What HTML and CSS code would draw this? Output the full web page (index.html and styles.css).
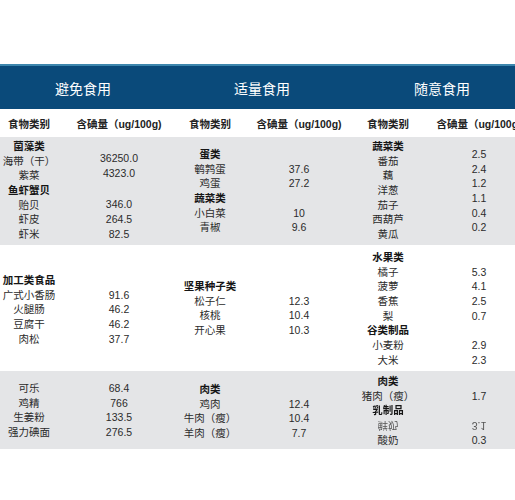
FILE: index.html
```html
<!DOCTYPE html>
<html lang="zh">

<head>
    <meta charset="UTF-8">
    <title>食物含碘量</title>
    <link rel="stylesheet" href="styles.css">
</head>

<body>
    <div class="sheet">
        <!-- blue title band -->
        <div class="banner">
            <div>避免食用</div>
            <div>适量食用</div>
            <div>随意食用</div>
        </div>

        <div class="heads">
            <div>食物类别</div>
            <div>含碘量（ug/100g)</div>
            <div>食物类别</div>
            <div>含碘量（ug/100g)</div>
            <div>食物类别</div>
            <div>含碘量（ug/100g)</div>
        </div>

        <!-- band 1 -->
        <div class="band gray tall-1">
            <div class="list pad-2">
                <span class="cat">菌藻类</span>
                <span>海带（干）</span>
                <span>紫菜</span>
                <span class="cat">鱼虾蟹贝</span>
                <span>贻贝</span>
                <span>虾皮</span>
                <span>虾米</span>
            </div>
            <div class="list pad-14">
                <span>36250.0</span>
                <span>4323.0</span>
                <span class="gap"></span>
                <span>346.0</span>
                <span>264.5</span>
                <span>82.5</span>
            </div>
            <div class="list pad-10">
                <span class="cat">蛋类</span>
                <span>鹌鹑蛋</span>
                <span>鸡蛋</span>
                <span class="cat">蔬菜类</span>
                <span>小白菜</span>
                <span>青椒</span>
            </div>
            <div class="list pad-10">
                <span></span>
                <span>37.6</span>
                <span>27.2</span>
                <span></span>
                <span>10</span>
                <span>9.6</span>
            </div>
            <div class="list pad-2">
                <span class="cat">蔬菜类</span>
                <span>番茄</span>
                <span>藕</span>
                <span>洋葱</span>
                <span>茄子</span>
                <span>西葫芦</span>
                <span>黄瓜</span>
            </div>
            <div class="list pad-10">
                <span>2.5</span>
                <span>2.4</span>
                <span>1.2</span>
                <span>1.1</span>
                <span>0.4</span>
                <span>0.2</span>
            </div>
        </div>

        <!-- band 2 -->
        <div class="band tall-2">
            <div class="list pad-28">
                <span class="cat">加工类食品</span>
                <span>广式小香肠</span>
                <span>火腿肠</span>
                <span>豆腐干</span>
                <span>肉松</span>
            </div>
            <div class="list pad-28">
                <span></span>
                <span>91.6</span>
                <span>46.2</span>
                <span>46.2</span>
                <span>37.7</span>
            </div>
            <div class="list pad-34">
                <span class="cat">坚果种子类</span>
                <span>松子仁</span>
                <span>核桃</span>
                <span>开心果</span>
            </div>
            <div class="list pad-34">
                <span></span>
                <span>12.3</span>
                <span>10.4</span>
                <span>10.3</span>
            </div>
            <div class="list pad-5">
                <span class="cat">水果类</span>
                <span>橘子</span>
                <span>菠萝</span>
                <span>香蕉</span>
                <span>梨</span>
                <span class="cat">谷类制品</span>
                <span>小麦粉</span>
                <span>大米</span>
            </div>
            <div class="list pad-5">
                <span></span>
                <span>5.3</span>
                <span>4.1</span>
                <span>2.5</span>
                <span>0.7</span>
                <span></span>
                <span>2.9</span>
                <span>2.3</span>
            </div>
        </div>

        <!-- band 3 -->
        <div class="band gray tall-3">
            <div class="list pad-10">
                <span>可乐</span>
                <span>鸡精</span>
                <span>生姜粉</span>
                <span>强力碘面</span>
            </div>
            <div class="list pad-10">
                <span>68.4</span>
                <span>766</span>
                <span>133.5</span>
                <span>276.5</span>
            </div>
            <div class="list pad-11">
                <span class="cat">肉类</span>
                <span>鸡肉</span>
                <span>牛肉（瘦）</span>
                <span>羊肉（瘦）</span>
            </div>
            <div class="list pad-11">
                <span></span>
                <span>12.4</span>
                <span>10.4</span>
                <span>7.7</span>
            </div>
            <div class="list pad-3">
                <span class="cat">肉类</span>
                <span>猪肉（瘦）</span>
                <span class="cat smudge">乳制品</span>
                <span class="flipped">鲜奶</span>
                <span>酸奶</span>
            </div>
            <div class="list pad-3">
                <span></span>
                <span>1.7</span>
                <span></span>
                <span class="flipped">3.1</span>
                <span>0.3</span>
            </div>
        </div>
    </div>
</body>

</html>
```

FILE: styles.css
```css
body {
    margin: 0;
    overflow: hidden;
    background: #fff;
    font-family: "Liberation Sans", "Noto Sans CJK SC", sans-serif;
    color: #2b2b2b;
}

.sheet {
    width: 540px;
    margin-top: 64px;
}

/* title band */
.banner {
    display: grid;
    grid-template-columns: 180px 178px 182px;
    height: 43px;
    background: #0a4a7a;
    border-top: 2px solid #3d86ad;
    color: #fff;
    font-size: 14px;
}

.banner div {
    display: flex;
    align-items: center;
    justify-content: center;
    padding-right: 14px;
}

/* same 6 columns everywhere: name, value x 3 */
.heads, .band {
    display: grid;
    grid-template-columns: 58px 122px 60px 118px 60px 122px;
}

.heads {
    height: 28px;
    align-items: center;
    font-size: 10.5px;
    font-weight: bold;
    color: #222;
}

.heads div {
    text-align: center;
    white-space: nowrap;
}

.band {
    font-size: 10.5px;
}

.gray {
    background: #e4e5e7;
}

.tall-1 { height: 108px; }
.tall-2 { height: 126px; }
.tall-3 { height: 78px; }

.list {
    display: flex;
    flex-direction: column;
    align-items: center;
}

.list span {
    height: 14.7px;
    line-height: 14.7px;
    white-space: nowrap;
}

.list .gap {
    height: 17px;
}

.cat {
    font-weight: bold;
    color: #151515;
}

.pad-2 { padding-top: 2px; }
.pad-3 { padding-top: 3px; }
.pad-5 { padding-top: 5px; }
.pad-10 { padding-top: 10px; }
.pad-11 { padding-top: 11px; }
.pad-14 { padding-top: 14px; }
.pad-28 { padding-top: 28px; }
.pad-34 { padding-top: 34px; }

/* blurry mirrored row in the source picture */
.smudge {
    filter: blur(0.3px);
}

.flipped {
    transform: scaleY(-1);
    filter: blur(0.4px);
    color: #555;
}
```
